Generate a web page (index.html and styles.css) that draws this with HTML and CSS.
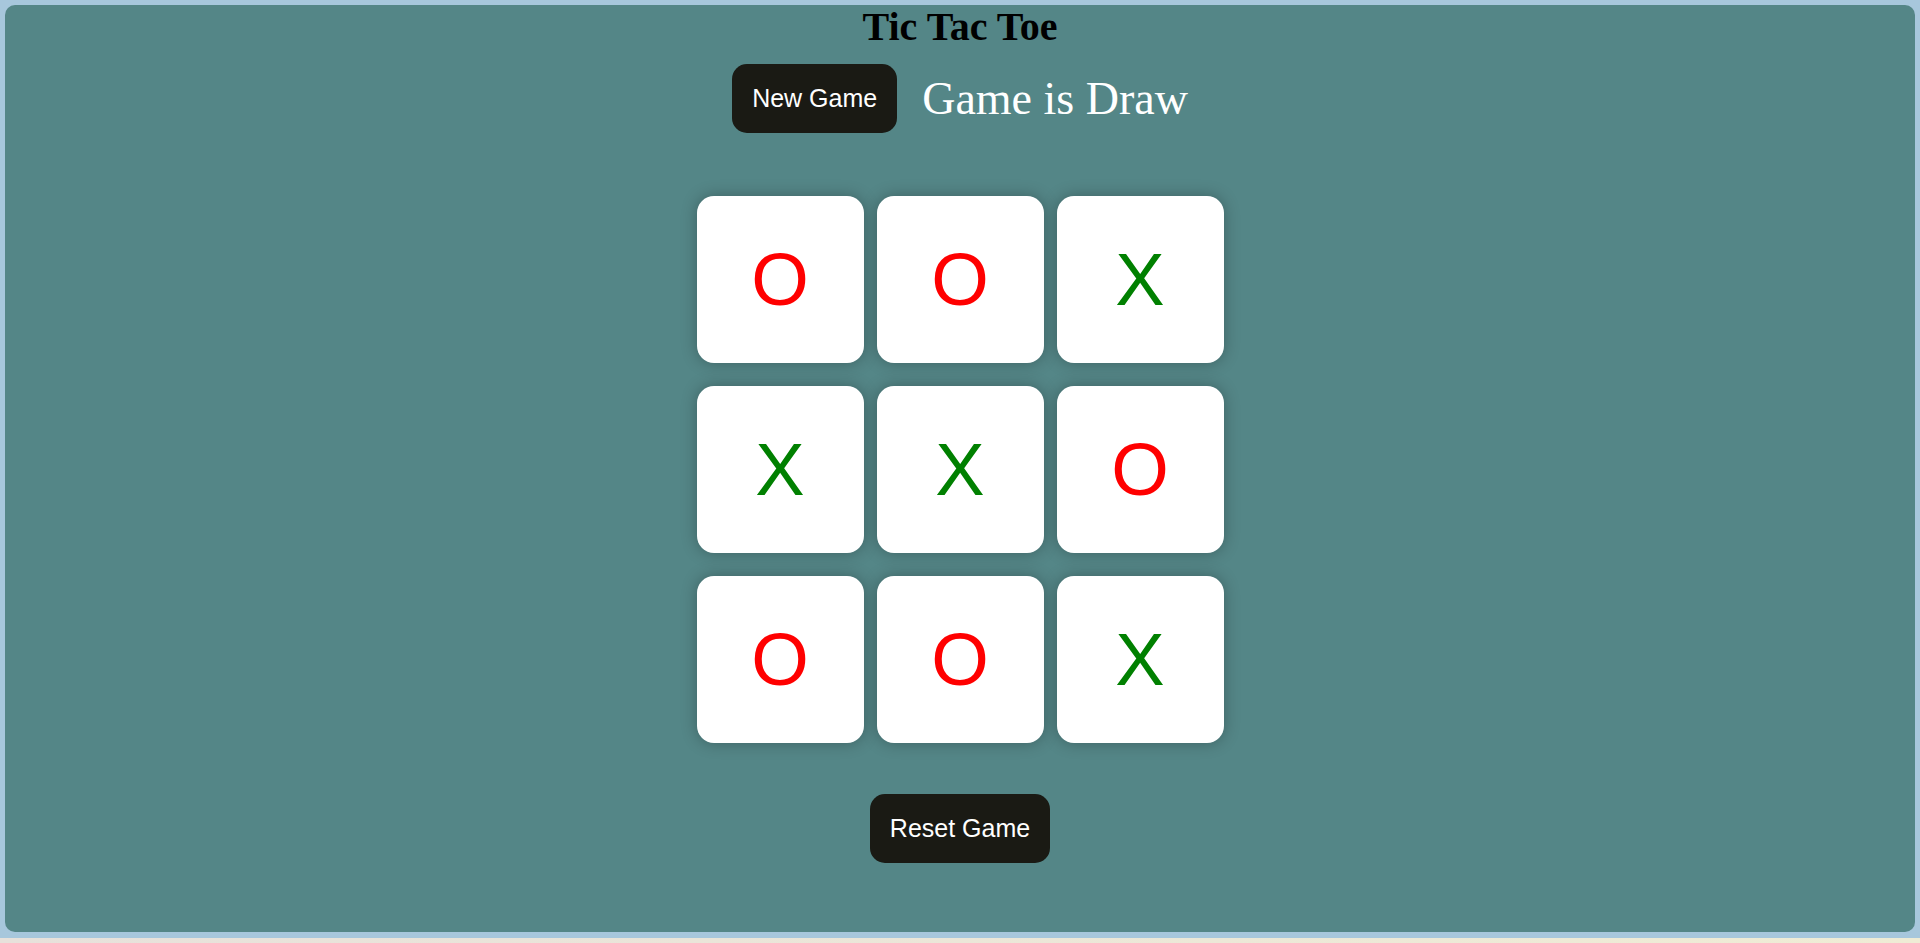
FILE: index.html
```html
<!DOCTYPE html>
<html lang="en">
<head>
<meta charset="utf-8">
<title>Tic Tac Toe</title>
<link rel="stylesheet" href="styles.css">
</head>
<body>
<main class="game">
  <h1 class="title">Tic Tac Toe</h1>
  <div class="status-row">
    <button class="btn">New Game</button>
    <h2 class="status">Game is Draw</h2>
  </div>
  <div class="board">
    <button class="cell o">O</button>
    <button class="cell o">O</button>
    <button class="cell x">X</button>
    <button class="cell x">X</button>
    <button class="cell x">X</button>
    <button class="cell o">O</button>
    <button class="cell o">O</button>
    <button class="cell o">O</button>
    <button class="cell x">X</button>
  </div>
  <button class="btn reset">Reset Game</button>
</main>
</body>
</html>
```
FILE: styles.css
```css
html {
  background: linear-gradient(90deg, #e7e1db, #efecd5);
  min-height: 100%;
}
body {
  margin: 0;
  box-sizing: border-box;
  height: 938px;
  padding: 5px 5px 6px;
  background: #a7c7dc;
}
.game {
  height: 100%;
  background: #548687;
  border-radius: 10px;
  display: flex;
  flex-direction: column;
  align-items: center;
}
.title {
  margin: 0;
  font-family: "Liberation Serif", serif;
  font-weight: 700;
  font-size: 40px;
  line-height: 44px;
  color: #000;
}
.status-row {
  display: flex;
  align-items: center;
  gap: 25px;
  margin-top: 15px;
}
.btn {
  border: none;
  background: #1a1a14;
  color: #fff;
  font-family: "Liberation Sans", Arial, sans-serif;
  font-size: 25px;
  line-height: normal;
  padding: 20px;
  border-radius: 15px;
  cursor: pointer;
}
.status {
  margin: 0;
  font-family: "Liberation Serif", serif;
  font-weight: 400;
  font-size: 46px;
  line-height: normal;
  color: #fff;
}
.board {
  display: grid;
  grid-template-columns: repeat(3, 167px);
  grid-auto-rows: 167px;
  column-gap: 13px;
  row-gap: 23px;
  margin-top: 63px;
}
.cell {
  border: none;
  background: #fff;
  border-radius: 17px;
  box-shadow: 0 0 16px rgba(0, 0, 0, 0.28);
  display: flex;
  align-items: center;
  justify-content: center;
  padding: 0;
  font-family: "Liberation Sans", Arial, sans-serif;
  font-size: 74px;
  line-height: normal;
}
.cell.o { color: #ff0000; }
.cell.x { color: #008000; }
.reset {
  margin-top: 51px;
}
```
